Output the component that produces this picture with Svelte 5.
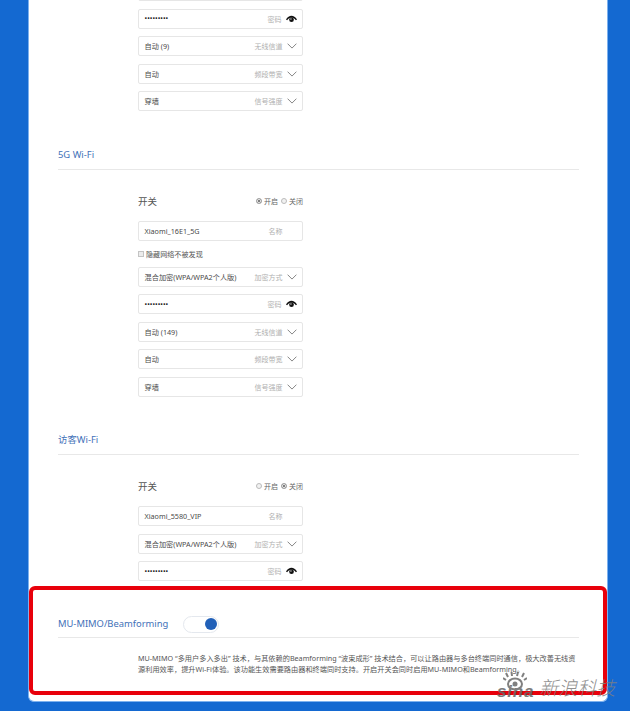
{#snippet field(value, label, kind)}
  <div class="field">
    <span class={kind === 'password' ? 'value dots' : 'value'}>{value}</span>
    <span class="label">{label}</span>
    {#if kind === 'select'}
      <svg class="chev" viewBox="0 0 12 7" width="10" height="6"><path d="M.7.7 6 6 11.3.7" fill="none" stroke="#6d6d6d" stroke-width="1"/></svg>
    {:else if kind === 'password'}
      <svg class="eye" viewBox="0 0 14 10" width="11" height="8"><path d="M0 5.6C2 2.3 4.4.8 7 .8s5 1.500 7 4.800l-1.400 1C10.800 4 9 3 7 3S3.200 4 1.400 6.600z" fill="#111"/><circle cx="7" cy="5.800" r="3" fill="#111"/><circle cx="6.300" cy="5" r=".8" fill="#fff"/></svg>
    {:else}
      <span class="pad"></span>
    {/if}
  </div>
{/snippet}

{#snippet toggleRow(on)}
  <div class="switch-row">
    <span class="switch-name">开关</span>
    <span class="radios">
      <span class={on ? 'radio checked' : 'radio'}></span>开启
      <span class={on ? 'radio second' : 'radio checked second'}></span>关闭
    </span>
  </div>
{/snippet}

<div class="page">
  <main class="card">
    <div class="fields top">
      {@render field('', '', 'text')}
      {@render field('•••••••••', '密码', 'password')}
      {@render field('自动 (9)', '无线信道', 'select')}
      {@render field('自动', '频段带宽', 'select')}
      {@render field('穿墙', '信号强度', 'select')}
    </div>

    <section class="block five">
      <h2>5G Wi-Fi</h2>
      <div class="fields">
        {@render toggleRow(true)}
        {@render field('Xiaomi_16E1_5G', '名称', 'text')}
        <label class="hide"><span class="box"></span>隐藏网络不被发现</label>
        {@render field('混合加密(WPA/WPA2个人版)', '加密方式', 'select')}
        {@render field('•••••••••', '密码', 'password')}
        {@render field('自动 (149)', '无线信道', 'select')}
        {@render field('自动', '频段带宽', 'select')}
        {@render field('穿墙', '信号强度', 'select')}
      </div>
    </section>

    <section class="block guest">
      <h2>访客Wi-Fi</h2>
      <div class="fields">
        {@render toggleRow(false)}
        {@render field('Xiaomi_5580_VIP', '名称', 'text')}
        {@render field('混合加密(WPA/WPA2个人版)', '加密方式', 'select')}
        {@render field('•••••••••', '密码', 'password')}
      </div>
    </section>

    <section class="block mimo">
      <h2>MU-MIMO/Beamforming <span class="toggle"><span class="knob"></span></span></h2>
      <p>MU-MIMO “多用户多入多出” 技术，与其依赖的Beamforming “波束成形” 技术结合，可以让路由器与多台终端同时通信，极大改善无线资<br>源利用效率，提升Wi-Fi体验。该功能生效需要路由器和终端同时支持。开启开关会同时启用MU-MIMO和Beamforming。</p>
    </section>

    <div class="redbox"></div>
    <div class="mark">
      <svg viewBox="0 0 24 20" width="24" height="20"><g fill="none" stroke="#6a6a6a" stroke-width="2"><ellipse cx="12" cy="12" rx="7" ry="5.500"/><path d="M5 5 3 1M9 4 8.500 0M14 4l1-4M19 5l2-4M3 8 0 6M21 8l3-2"/></g><circle cx="12" cy="12" r="2.500" fill="#6a6a6a"/></svg>
      <span class="sina">sina</span><span class="kj">新浪科技</span>
    </div>
  </main>
</div>

<style>
  :global(body) { margin: 0; background: #1469d1; }
  .page {
    width: 630px;
    height: 711px;
    overflow: hidden;
    background: #1469d1;
    font-family: "Noto Sans", "Noto Sans CJK SC", sans-serif;
  }
  .card {
    position: relative;
    box-sizing: border-box;
    width: 580px;
    height: 730px;
    margin: -28px 0 0 28px;
    padding: 0 29px;
    background: #fff;
    border: 1px solid #7db1ee;
    border-top: 0;
    border-radius: 0 0 6px 6px;
  }
  .fields {
    display: flex;
    flex-direction: column;
    gap: 7.5px;
    width: 165px;
    margin-left: 80px;
  }
  .top { padding-top: 9px; }
  .field {
    box-sizing: border-box;
    display: flex;
    align-items: center;
    height: 20px;
    padding: 0 5.500px;
    border: 1px solid #e6e6e6;
    border-radius: 2px;
    color: #4a4a4a;
    font-size: 7.200px;
    white-space: nowrap;
  }
  .value { flex: 1; }
  .dots { font-size: 7px; color: #222; }
  .label { color: #b0b0b0; font-size: 7px; }
  .chev { margin-left: 4px; }
  .eye { margin-left: 4px; }
  .pad { width: 14px; }
  .block h2 {
    display: flex;
    align-items: center;
    gap: 15px;
    box-sizing: border-box;
    width: 521px;
    margin: 0;
    border-bottom: 1px solid #e8e8e8;
    color: #3f71b8;
    font-size: 9.400px;
    font-weight: 400;
    line-height: 16px;
    padding-bottom: 6px;
  }
  .block.five { padding-top: 36px; }
  .block.guest { padding-top: 35px; }
  .block.mimo { padding-top: 34.500px; }
  .block.mimo h2 { padding-bottom: 4.500px; }
  .block.five .fields { padding-top: 21px; }
  .block.guest .fields { padding-top: 22px; }
  .switch-row {
    display: flex;
    align-items: center;
    justify-content: space-between;
    height: 19px;
    margin-bottom: 3px;
    color: #555;
    font-size: 9.500px;
  }
  .radios {
    display: flex;
    align-items: center;
    color: #666;
    font-size: 7px;
  }
  .radio {
    box-sizing: border-box;
    width: 6px;
    height: 6px;
    margin-right: 2px;
    border: 1px solid #bbb;
    border-radius: 50%;
    background: #f2f2f2;
  }
  .radio.second { margin-left: 3px; }
  .radio.checked { background: #555; box-shadow: inset 0 0 0 1px #fff; border-color: #aaa; }
  .hide {
    display: flex;
    align-items: center;
    height: 10px;
    margin: .5px 0;
    color: #555;
    font-size: 7.100px;
  }
  .box {
    box-sizing: border-box;
    width: 6px;
    height: 6px;
    margin-right: 2px;
    border: 1px solid #c4c4c4;
    background: #ececec;
  }
  .toggle {
    box-sizing: border-box;
    position: relative;
    display: inline-block;
    width: 36px;
    height: 17px;
    border: 1px solid #e4e8ee;
    border-radius: 9px;
    background: #fff;
  }
  .knob {
    position: absolute;
    right: 1px;
    top: 1.500px;
    width: 12px;
    height: 12px;
    border-radius: 50%;
    background: #2160b8;
  }
  .mimo p {
    width: 441px;
    margin: 15px 0 0 80px;
    color: #555;
    font-size: 7.200px;
    line-height: 11px;
    white-space: nowrap;
  }
  .redbox {
    position: absolute;
    left: 0;
    top: 614px;
    width: 570px;
    height: 101px;
    border: 4px solid #e8000b;
    border-radius: 6px;
  }
  .mark {
    position: absolute;
    left: 468px;
    top: 702px;
    display: flex;
    align-items: flex-end;
    height: 26px;
    color: #666;
    white-space: nowrap;
    opacity: .85;
  }
  .mark svg { position: absolute; left: 6px; top: -2px; }
  .sina {
    font: italic 700 17px/16px "Liberation Sans", sans-serif;
    letter-spacing: .8px;
  }
  .kj {
    margin: 0 0 3px 5px;
    font: italic 300 19px/20px "Noto Sans CJK SC", sans-serif;
    color: #808080;
  }
</style>
